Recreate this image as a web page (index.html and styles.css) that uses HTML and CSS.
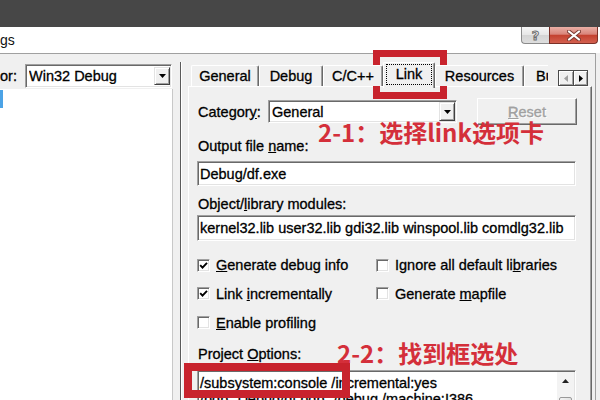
FILE: index.html
```html
<!DOCTYPE html>
<html>
<head>
<meta charset="utf-8">
<link rel="stylesheet" href="styles.css">
</head>
<body>
<div class="screen">
  <div class="topbar"></div>
  <div class="titlebar">
    <span class="title">gs</span>
    <div class="caption">
      <div class="cbtn help"><span class="q">?</span></div>
      <div class="cbtn close">
        <svg width="14" height="11" viewBox="0 0 14 11"><path d="M2 1.5 L12 9.5 M12 1.5 L2 9.5" stroke="#7a3a32" stroke-width="4" stroke-linecap="round"/><path d="M2 1.5 L12 9.5 M12 1.5 L2 9.5" stroke="#fff" stroke-width="2.2" stroke-linecap="round"/></svg>
      </div>
    </div>
  </div>
  <div class="dialog">
    <div class="left">
      <div class="cfg-row">
        <span class="cfg-label">or:</span>
        <div class="combo cfg-combo">
          <span class="combo-text">Win32 Debug</span>
          <span class="drop"><svg width="7" height="4" viewBox="0 0 7 4"><path d="M0 0 H7 L3.5 4 Z" fill="#000"/></svg></span>
        </div>
      </div>
      <div class="tree"><div class="tree-sel"></div></div>
    </div>
    <div class="vsep"></div>
    <div class="right">
      <div class="tabrow">
        <div class="tabstrip">
          <div class="tab t-general">General</div>
          <div class="tab t-debug">Debug</div>
          <div class="tab t-cpp">C/C++</div>
          <div class="tab tab-active t-link"><span class="focus">Link</span></div>
          <div class="tab t-res">Resources</div>
          <div class="tab t-build">Build</div>
        </div>
        <div class="spin">
          <span class="spin-btn"><svg width="4" height="7" viewBox="0 0 4 7"><path d="M4 0 V7 L0 3.5 Z" fill="#a0a0a0"/></svg></span>
          <span class="spin-btn"><svg width="4" height="7" viewBox="0 0 4 7"><path d="M0 0 V7 L4 3.5 Z" fill="#000"/></svg></span>
        </div>
      </div>
      <div class="page">
        <div class="row-cat">
          <span class="cat-lbl">Categor<u>y</u>:</span>
          <div class="combo cat-combo">
            <span class="combo-text">General</span>
            <span class="drop"><svg width="7" height="4" viewBox="0 0 7 4"><path d="M0 0 H7 L3.5 4 Z" fill="#000"/></svg></span>
          </div>
          <div class="btn-reset"><span><u>R</u>eset</span></div>
        </div>
        <div class="lbl out-lbl">Output file <u>n</u>ame:</div>
        <div class="edit out-edit">Debug/df.exe</div>
        <div class="lbl obj-lbl">Object/<u>l</u>ibrary modules:</div>
        <div class="edit obj-edit">kernel32.lib user32.lib gdi32.lib winspool.lib comdlg32.lib</div>
        <div class="checks">
          <div class="chk"><span class="box"><svg width="9" height="9" viewBox="0 0 9 9"><path d="M1.2 4.2 L3.5 6.6 L8 1.8" fill="none" stroke="#000" stroke-width="1.9"/></svg></span><span><u>G</u>enerate debug info</span></div>
          <div class="chk"><span class="box"></span><span>Ignore all default li<u>b</u>raries</span></div>
          <div class="chk"><span class="box"><svg width="9" height="9" viewBox="0 0 9 9"><path d="M1.2 4.2 L3.5 6.6 L8 1.8" fill="none" stroke="#000" stroke-width="1.9"/></svg></span><span>Link <u>i</u>ncrementally</span></div>
          <div class="chk"><span class="box"></span><span>Generate <u>m</u>apfile</span></div>
          <div class="chk"><span class="box"></span><span><u>E</u>nable profiling</span></div>
        </div>
        <div class="lbl opt-lbl">Project <u>O</u>ptions:</div>
        <div class="memo">
          <div class="memo-text">/subsystem:console /incremental:yes<br>/pdb:"Debug/df.pdb" /debug /machine:I386</div>
          <div class="memo-scroll">
            <span class="sc-up"><svg width="7" height="4" viewBox="0 0 7 4"><path d="M0 4 H7 L3.5 0 Z" fill="#222"/></svg></span>
            <span class="sc-thumb"></span>
          </div>
        </div>
      </div>
    </div>
  </div>
  <div class="mark mark-link"></div>
  <div class="mark mark-opt"></div>
  <div class="note note-1">2-1：选择link选项卡</div>
  <div class="note note-2">2-2：找到框选处</div>
</div>
</body>
</html>
```
FILE: styles.css
```css
* { box-sizing: border-box; }
html, body { margin: 0; padding: 0; }
body {
  font-family: "Liberation Sans", Arial, sans-serif;
  font-size: 14.5px;
  color: #000;
}
.screen {
  position: relative;
  width: 600px;
  height: 400px;
  overflow: hidden;
  background: #f0f0f0;
  display: flex;
  flex-direction: column;
}
.topbar { flex: none; height: 27px; background: #474747; }
.titlebar {
  flex: none;
  height: 26px;
  background: #fff;
  display: flex;
  justify-content: space-between;
  align-items: flex-start;
}
.title { font-size: 14px; line-height: 27px; color: #111; }
.caption { display: flex; margin-right: 2px; }
.cbtn { height: 17px; display: flex; align-items: center; justify-content: center; }
.help {
  width: 28px;
  background: linear-gradient(#f6f6f6, #e6e6e6 50%, #d4d4d4 52%, #dedede);
  border: 1px solid #8b8b8b;
  border-top: none;
  border-right: none;
  border-radius: 0 0 0 4px;
}
.q {
  font-family: "DejaVu Sans", sans-serif;
  font-weight: bold;
  font-size: 13px;
  line-height: 15px;
  color: #f2f2f2;
  -webkit-text-stroke: 1px #6e6e6e;
}
.close {
  width: 49px;
  background: linear-gradient(#eab0a6, #d9847a 45%, #c4412f 52%, #d3604f);
  border: 1px solid #7b3027;
  border-top: none;
  border-radius: 0 0 4px 0;
}
.dialog {
  flex: 1;
  min-height: 0;
  width: 596px;
  display: flex;
  border-top: 1px solid #a0a0a0;
  border-right: 1px solid #a0a0a0;
  -webkit-text-stroke: 0.3px #000;
}
.left { flex: none; width: 173px; display: flex; flex-direction: column; }
.cfg-row { display: flex; align-items: center; margin-top: 10px; height: 24px; }
.cfg-label { width: 25px; white-space: nowrap; }
.combo {
  display: flex;
  align-items: center;
  background: #fff;
  border: 1px solid;
  border-color: #a0a0a0 #fff #fff #a0a0a0;
  box-shadow: inset 1px 1px #696969, inset -1px -1px #e3e3e3;
  padding: 1px 1px 1px 3px;
}
.combo-text { flex: 1; white-space: nowrap; overflow: hidden; }
.cfg-combo { width: 147px; height: 24px; }
.drop {
  flex: none;
  width: 16px;
  height: 18px;
  background: #f0f0f0;
  border: 1px solid;
  border-color: #e3e3e3 #404040 #404040 #e3e3e3;
  box-shadow: inset 1px 1px #fff, inset -1px -1px #a0a0a0;
  display: flex;
  align-items: center;
  justify-content: center;
}
.drop svg { display: block; }
.tree {
  flex: 1;
  margin-top: 1px;
  background: #fff;
  border-right: 1px solid #c8c8c8;
}
.tree-sel { width: 3px; height: 18px; margin-top: 1px; background: #4ca3e6; }
.vsep {
  flex: none;
  width: 2px;
  margin-left: 7px;
  margin-top: 8px;
  border-left: 1px solid #5a5a5a;
  border-right: 1px solid #fff;
}
.right { flex: none; width: 404px; margin-left: 6px; display: flex; flex-direction: column; }
.tabrow {
  position: relative;
  z-index: 1;
  flex: none;
  height: 34px;
  display: flex;
  align-items: flex-end;
}
.tabstrip {
  display: flex;
  align-items: flex-end;
  margin-left: 3px;
  width: 357px;
  height: 34px;
  overflow: hidden;
}
.tab {
  flex: none;
  height: 21px;
  margin-bottom: 2px;
  background: #f0f0f0;
  border-top: 1px solid #fff;
  border-left: 1px solid #fff;
  border-right: 1px solid #696969;
  box-shadow: inset -1px 0 #a0a0a0;
  border-radius: 2px 2px 0 0;
  display: flex;
  align-items: center;
  justify-content: center;
  line-height: 18px;
  white-space: nowrap;
}
.t-general { width: 68px; }
.t-debug { width: 64px; }
.t-cpp { width: 60px; }
.t-link { width: 52px; }
.t-res { width: 89px; }
.t-build { width: 40px; justify-content: flex-start; padding-left: 11px; }
.tab-active {
  height: 26px;
  margin-bottom: 0;
  align-items: flex-start;
}
.focus {
  margin-top: 1px;
  width: 46px;
  height: 21px;
  border: 1px dotted #000;
  text-align: center;
  line-height: 19px;
}
.spin {
  flex: none;
  display: flex;
  margin-left: 10px;
  margin-bottom: 2px;
  height: 16px;
  border: 1px solid #4a4a4a;
  background: #f0f0f0;
}
.spin-btn {
  width: 14px;
  height: 14px;
  display: flex;
  align-items: center;
  justify-content: center;
  box-shadow: inset 1px 1px #fff, inset -1px -1px #a0a0a0;
}
.spin-btn + .spin-btn { border-left: 1px solid #4a4a4a; }
.page {
  flex: 1;
  margin-top: -2px;
  background: #f0f0f0;
  border-top: 1px solid #fff;
  border-left: 1px solid #fff;
  border-right: 1px solid #696969;
  box-shadow: inset -1px 0 #a0a0a0;
  padding: 11px 0 0 9px;
}
.row-cat { display: flex; align-items: center; height: 27px; }
.cat-lbl { width: 70px; white-space: nowrap; }
.cat-combo { width: 189px; height: 23px; }
.cat-combo .drop { height: 19px; }
.btn-reset {
  margin-left: 20px;
  width: 100px;
  height: 27px;
  border: 1px solid;
  border-color: #fff #696969 #696969 #fff;
  box-shadow: inset -1px -1px #a0a0a0;
  color: #a0a0a0;
  -webkit-text-stroke: 0.3px #a0a0a0;
  text-shadow: 1px 1px #fff;
  display: flex;
  align-items: center;
  justify-content: center;
}
.lbl { line-height: 17px; white-space: nowrap; }
.out-lbl { margin-top: 13px; }
.edit {
  margin-left: -1px;
  width: 379px;
  background: #fff;
  border: 1px solid;
  border-color: #a0a0a0 #fff #fff #a0a0a0;
  box-shadow: inset 1px 1px #696969, inset -1px -1px #e3e3e3;
  padding-left: 2px;
  white-space: nowrap;
  overflow: hidden;
  display: flex;
  align-items: center;
}
.out-edit { margin-top: 6px; height: 25px; }
.obj-lbl { margin-top: 10px; }
.obj-edit { margin-top: 2px; height: 26px; }
.checks {
  margin-top: 10px;
  margin-left: -1px;
  display: grid;
  grid-template-columns: 179px 1fr;
  grid-template-rows: 28px 29px 29px;
}
.chk { display: flex; align-items: center; gap: 6px; white-space: nowrap; }
.box {
  flex: none;
  width: 13px;
  height: 13px;
  background: #fff;
  border: 1px solid;
  border-color: #a0a0a0 #fff #fff #a0a0a0;
  box-shadow: inset 1px 1px #696969, inset -1px -1px #e3e3e3;
  display: flex;
  align-items: center;
  justify-content: center;
}
.box svg { display: block; }
.opt-lbl { margin-top: 9px; }
.memo {
  margin-top: 7px;
  margin-left: -1px;
  width: 379px;
  height: 60px;
  background: #fff;
  border: 1px solid;
  border-color: #a0a0a0 #fff #fff #a0a0a0;
  box-shadow: inset 1px 1px #696969, inset -1px -1px #e3e3e3;
  padding: 1px;
  display: flex;
}
.memo-text {
  flex: 1;
  padding: 3px 0 0 1px;
  line-height: 16px;
  white-space: nowrap;
  overflow: hidden;
}
.memo-scroll {
  flex: none;
  width: 17px;
  background: #f3f3f3;
  display: flex;
  flex-direction: column;
  align-items: center;
}
.sc-up { height: 17px; display: flex; align-items: center; justify-content: center; }
.sc-up svg { display: block; }
.sc-thumb {
  margin-top: 8px;
  width: 13px;
  height: 20px;
  border: 1px solid #9a9a9a;
  border-radius: 2px;
  background: linear-gradient(90deg, #f4f4f4, #e2e2e2);
}
.mark {
  position: absolute;
  border: 7px solid #c8232d;
}
.mark-link { left: 373px; top: 50px; width: 74px; height: 49px; }
.mark-opt { left: 184px; top: 363px; width: 166px; height: 35px; border-width: 8px; }
.note {
  position: absolute;
  font-family: "Noto Sans CJK SC", "Noto Sans", sans-serif;
  font-weight: bold;
  font-size: 24px;
  line-height: 24px;
  color: #d42f3a;
  white-space: nowrap;
}
.note-1 { left: 318px; top: 120px; }
.note-2 { left: 337px; top: 341px; }
```
